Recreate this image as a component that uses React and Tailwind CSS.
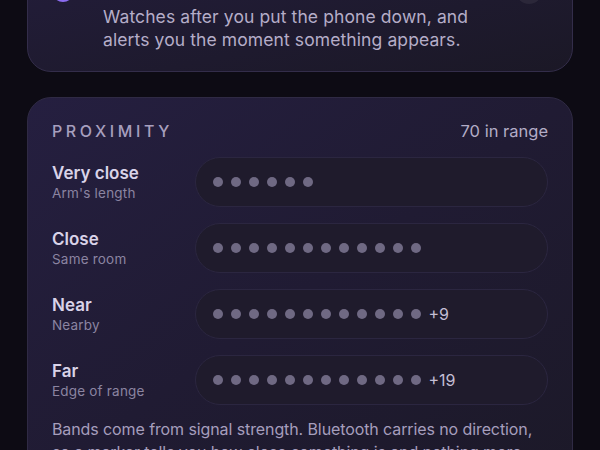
import React from 'react';

const bands = [
  { id: 'very-close', label: 'Very close', hint: "Arm's length", dots: 6, extra: 0 },
  { id: 'close', label: 'Close', hint: 'Same room', dots: 12, extra: 0 },
  { id: 'near', label: 'Near', hint: 'Nearby', dots: 12, extra: 9 },
  { id: 'far', label: 'Far', hint: 'Edge of range', dots: 12, extra: 19 },
];

const BandRow = ({ band }) => (
  <div className="flex items-center">
    <div className="w-[143px] shrink-0 flex flex-col">
      <span className="text-[17px] leading-[21px] font-semibold text-[#d9d3e8]">{band.label}</span>
      <span className="text-[13.5px] leading-[18px] text-[#8b84a1] tracking-[0.2px]">{band.hint}</span>
    </div>
    <div className="flex-1 h-[50px] rounded-full bg-[#1f1b2c] border border-[#2b2640] flex items-center pl-[17px]">
      <div className="flex items-center gap-[8.5px]">
        {Array.from({ length: band.dots }).map((_, i) => (
          <span key={i} className="w-[9.5px] h-[9.5px] rounded-full bg-[#6f6983]" />
        ))}
      </div>
      {band.extra > 0 && (
        <span className="ml-[8px] text-[16px] text-[#c4bed4]">+{band.extra}</span>
      )}
    </div>
  </div>
);

export default function App() {
  return (
    <div
      className="w-[600px] h-[450px] overflow-hidden bg-[#0d0b14] px-[27px]"
      style={{ fontFamily: 'Inter, "Noto Sans", sans-serif' }}
    >
      {/* Sentry card (cut off at top) */}
      <div className="mt-[-44px] rounded-[24px] border border-[#332d4a] bg-gradient-to-br from-[#231d3b] to-[#1b1826] px-[24px] pt-[20px] pb-[20px]">
        <div className="h-[28px] flex items-center justify-between">
          <div className="flex items-center gap-[28px]">
            <span className="w-[22px] h-[22px] rounded-full border-[3px] border-[#8b6cf0]" />
            <span className="text-[17px] font-semibold text-[#e2dcf0]">Sentry mode</span>
          </div>
          <span className="w-[26px] h-[26px] rounded-full bg-[#2b2739] mr-[6px]" />
        </div>
        <p className="pl-[51px] text-[17.5px] leading-[23px] tracking-[0.1px] text-[#b5adc8]">
          Watches after you put the phone down, and
          <br />
          alerts you the moment something appears.
        </p>
      </div>

      {/* Proximity card */}
      <div className="mt-[25px] rounded-[24px] border border-[#2f2a44] bg-gradient-to-br from-[#251f40] via-[#201b33] to-[#1c1928] px-[24px] pt-[23px] pb-[24px]">
        <div className="flex items-center justify-between h-[20px]">
          <span className="text-[16px] font-medium tracking-[3.6px] text-[#a79fbe]">PROXIMITY</span>
          <span className="text-[16.5px] text-[#b3acc6]">70 in range</span>
        </div>
        <div className="mt-[16px] flex flex-col gap-[16px]">
          {bands.map((b) => (
            <BandRow key={b.id} band={b} />
          ))}
        </div>
        <p className="mt-[13px] text-[16px] leading-[23px] tracking-[-0.1px] text-[#a69ebd]">
          Bands come from signal strength. Bluetooth carries no direction,
          so a marker tells you how close something is and nothing more.
        </p>
      </div>
    </div>
  );
}
